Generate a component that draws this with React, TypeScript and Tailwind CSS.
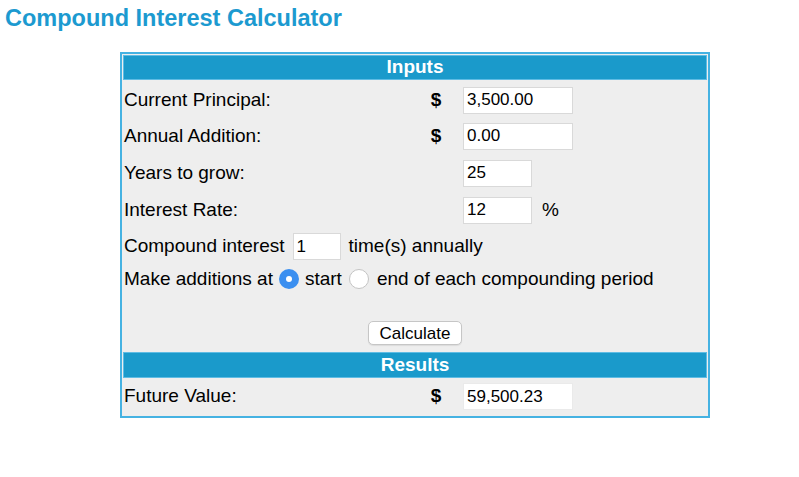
import { useState } from "react";

const inputCls =
    "h-[27px] border border-[#d9d9d9] bg-white px-[3px] text-[17px] text-black outline-none";

const MoneyRow = ({ label, value, sign, suffix, wide, h }: { label: string; value: string; sign?: boolean; suffix?: string; wide?: boolean; h: string }) => (
    <div className={`flex items-center ${h}`}>
        <div className="w-[297px] pl-px">{label}</div>
        <div className="w-[32px] text-center font-bold">{sign ? "$" : ""}</div>
        <input className={`${inputCls} ml-[11px] ${wide ? "w-[110px]" : "w-[69px]"}`} defaultValue={value} />
        {suffix && <span className="ml-[10px]">{suffix}</span>}
    </div>
);

const Header = ({ title, h }: { title: string; h: string }) => (
    <div className={`flex items-center justify-center border border-[#5fbce4] bg-[#1a9acb] font-bold text-white ${h}`}>
        {title}
    </div>
);

export default function App() {
    const [when, setWhen] = useState<"start" | "end">("start");

    return (
        <div className="min-h-screen bg-white font-['Liberation_Sans',Arial,sans-serif] text-[19px] text-black">
            <h1 className="pl-[5px] pt-[4px] text-[23.5px] font-bold leading-[28px] text-[#1c9ad0]">
                Compound Interest Calculator
            </h1>
            <div className="ml-[120px] mt-[20px] w-[590px] border-2 border-[#45b2e2] bg-[#eeeeee] p-px">
                <Header title="Inputs" h="h-[25px]" />
                <div className="h-[2px]" />
                <MoneyRow label="Current Principal:" value="3,500.00" sign wide h="h-[36px]" />
                <MoneyRow label="Annual Addition:" value="0.00" sign wide h="h-[36px]" />
                <MoneyRow label="Years to grow:" value="25" h="h-[38px]" />
                <MoneyRow label="Interest Rate:" value="12" suffix="%" h="h-[36px]" />
                <div className="flex h-[37px] items-center pl-px">
                    <span>Compound interest</span>
                    <input className={`${inputCls} ml-[8px] w-[48px]`} defaultValue="1" />
                    <span className="ml-[8px]">time(s) annually</span>
                </div>
                <div className="flex h-[28px] items-center pl-px">
                    <span>Make additions at</span>
                    <button
                        onClick={() => setWhen("start")}
                        className={`ml-[6px] flex h-[20px] w-[20px] items-center justify-center rounded-full ${when === "start" ? "bg-[#3b8ff0]" : "border border-[#c4c4c4] bg-white"}`}
                    >
                        {when === "start" && <span className="h-[6px] w-[6px] rounded-full bg-white" />}
                    </button>
                    <span className="ml-[6px]">start</span>
                    <button
                        onClick={() => setWhen("end")}
                        className={`ml-[7px] flex h-[20px] w-[20px] items-center justify-center rounded-full ${when === "end" ? "bg-[#3b8ff0]" : "border border-[#c4c4c4] bg-white"}`}
                    >
                        {when === "end" && <span className="h-[6px] w-[6px] rounded-full bg-white" />}
                    </button>
                    <span className="ml-[8px]">end of each compounding period</span>
                </div>
                <div className="flex h-[59px] items-start justify-center pt-[28px]">
                    <button className="h-[24px] w-[94px] rounded-[5px] border border-[#c6c6c6] bg-white text-[17px] leading-none shadow-[0_1px_1px_rgba(0,0,0,0.08)]">
                        Calculate
                    </button>
                </div>
                <Header title="Results" h="h-[26px]" />
                <div className="flex h-[37px] items-center">
                    <div className="w-[297px] pl-px">Future Value:</div>
                    <div className="w-[32px] text-center font-bold">$</div>
                    <input className={`${inputCls} ml-[11px] h-[25px] w-[110px] border-[#eaeaea]`} defaultValue="59,500.23" />
                </div>
            </div>
        </div>
    );
}
